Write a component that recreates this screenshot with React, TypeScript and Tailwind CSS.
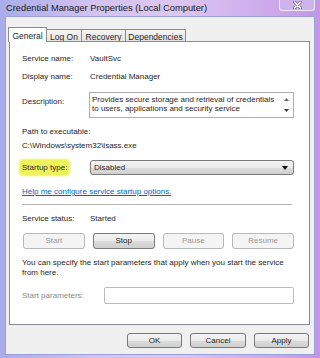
import React from 'react';

const Btn: React.FC<{ label: string; disabled?: boolean; className?: string }> = ({ label, disabled, className = '' }) => (
  <div
    className={`flex items-center justify-center rounded-[3px] border text-[8px] ${
      disabled
        ? 'border-[#b5b9bc] bg-[#f4f4f4] text-[#9a9a9a]'
        : 'border-[#7a7a7a] bg-[linear-gradient(180deg,#f4f4f4_0%,#ebebeb_50%,#dcdcdc_51%,#cfcfcf_100%)] text-[#1e1e1e]'
    } ${className}`}
  >
    {label}
  </div>
);

const Row: React.FC<{ label: string; children: React.ReactNode; className?: string }> = ({ label, children, className = '' }) => (
  <div className={`flex h-[10px] items-center leading-[10px] ${className}`}>
    <div className="w-[68px] shrink-0">{label}</div>
    <div>{children}</div>
  </div>
);

export default function App() {
  return (
    <div className="flex h-[358px] w-[320px] flex-col overflow-hidden bg-[linear-gradient(90deg,#a9acea_0%,#d4c3f0_30%,#dcc7f1_55%,#cfaeec_80%,#c297e6_100%)] font-['Liberation_Sans',Arial,sans-serif] text-[#262626]">
      {/* title bar */}
      <div className="flex h-[16px] shrink-0 items-start">
        <div className="pl-[6px] pt-[3px] text-[9.3px] leading-[11px] text-[#1a1a1a]">
          Credential Manager Properties (Local Computer)
        </div>
        <div className="ml-auto mr-[5px] flex h-[11px] w-[36px] items-center justify-center rounded-b-[3px] border border-t-0 border-[#efe6f8] bg-[#cfb4ec]">
          <svg width="9" height="8" viewBox="0 0 9 8">
            <path d="M1.5 1 L7.5 7 M7.5 1 L1.5 7" stroke="#6b5a86" strokeWidth="3" strokeLinecap="round" />
            <path d="M1.5 1 L7.5 7 M7.5 1 L1.5 7" stroke="#ffffff" strokeWidth="1.6" strokeLinecap="round" />
          </svg>
        </div>
      </div>

      {/* window body */}
      <div className="mx-[5px] flex h-[339px] shrink-0 flex-col border border-[#9a9fd6] bg-[#f0f0f0] pt-[10px]">
        {/* tabs */}
        <div className="flex h-[15px] items-end pl-[2px] text-[8.5px]">
          <div className="relative z-10 flex h-[15px] w-[39px] items-start justify-center border border-b-0 border-[#898c95] bg-white pt-[2px]">
            General
          </div>
          <div className="flex h-[13px] w-[35px] items-start justify-center border border-l-0 border-[#898c95] bg-[linear-gradient(180deg,#f4f4f4,#e4e4e4)] pt-[1px]">
            Log On
          </div>
          <div className="flex h-[13px] w-[44px] items-start justify-center border border-l-0 border-[#898c95] bg-[linear-gradient(180deg,#f4f4f4,#e4e4e4)] pt-[1px]">
            Recovery
          </div>
          <div className="flex h-[13px] w-[60px] items-start justify-center border border-l-0 border-[#898c95] bg-[linear-gradient(180deg,#f4f4f4,#e4e4e4)] pt-[1px]">
            Dependencies
          </div>
        </div>

        {/* panel */}
        <div className="-mt-px ml-[3px] mr-[4px] h-[284px] border border-[#898c95] bg-white pl-[12px] pr-[15px] pt-[12px] text-[8px]">
          <Row label="Service name:">VaultSvc</Row>
          <Row label="Display name:" className="mt-[8px]">Credential Manager</Row>

          <div className="mt-[10px] flex">
            <div className="w-[67px] shrink-0 pt-[5px] leading-[10px]">Description:</div>
            <div className="flex h-[26px] w-[205px] border border-[#abadb3] bg-white">
              <div className="flex-1 whitespace-nowrap pl-[2px] pt-[2px] leading-[9px]">
                Provides secure storage and retrieval of credentials
                <br />
                to users, applications and security service
              </div>
              <div className="flex w-[14px] flex-col items-center justify-between py-[5px]">
                <svg width="5" height="3" viewBox="0 0 5 3"><path d="M0 3 L2.5 0 L5 3Z" fill="#6a6a6a" /></svg>
                <svg width="5" height="3" viewBox="0 0 5 3"><path d="M0 0 L2.5 3 L5 0Z" fill="#3a3a3a" /></svg>
              </div>
            </div>
          </div>

          <div className="mt-[9px] h-[10px] leading-[10px]">Path to executable:</div>
          <div className="mt-[4px] h-[10px] leading-[10px]">C:\Windows\system32\lsass.exe</div>

          <div className="mt-[9px] flex h-[15px] items-center">
            <div className="w-[68px] shrink-0">
              <span className="-ml-[2px] rounded-[3px] bg-[#eef35c] px-[2px] py-[3px] shadow-[0_0_2px_1px_#eef35c]">
                Startup type:
              </span>
            </div>
            <div className="flex h-[15px] w-[205px] items-center justify-between rounded-[3px] border border-[#7a7a7a] bg-[linear-gradient(180deg,#f4f4f4_0%,#ebebeb_50%,#dddddd_51%,#d0d0d0_100%)] pl-[3px] pr-[5px]">
              <span>Disabled</span>
              <svg width="6" height="4" viewBox="0 0 6 4"><path d="M0 0 L3 4 L6 0Z" fill="#111" /></svg>
            </div>
          </div>

          <div className="mt-[12px] h-[10px] leading-[10px] text-[#0066cc] underline">
            Help me configure service startup options.
          </div>

          <div className="mt-[7px] h-px w-[270px] bg-[#b4b4b4]" />

          <Row label="Service status:" className="mt-[9px]">Started</Row>

          <div className="ml-[1px] mt-[9px] grid w-[271px] grid-cols-4 gap-[8px]">
            <Btn label="Start" disabled className="h-[16px]" />
            <Btn label="Stop" className="h-[16px]" />
            <Btn label="Pause" disabled className="h-[16px]" />
            <Btn label="Resume" disabled className="h-[16px]" />
          </div>

          <div className="mt-[9px] whitespace-nowrap leading-[10px]">
            You can specify the start parameters that apply when you start the service
            <br />
            from here.
          </div>

          <div className="mt-[9px] flex h-[17px] items-center">
            <div className="w-[82px] shrink-0 text-[#8a8a8a]">Start parameters:</div>
            <div className="h-[17px] w-[191px] rounded-[2px] border border-[#b9bcc2] bg-white" />
          </div>
        </div>

        {/* footer */}
        <div className="flex justify-end gap-[8px] pr-[5px] pt-[8px]">
          <Btn label="OK" className="h-[15px] w-[55px]" />
          <Btn label="Cancel" className="h-[15px] w-[56px]" />
          <Btn label="Apply" className="h-[15px] w-[55px]" />
        </div>
      </div>
    </div>
  );
}
